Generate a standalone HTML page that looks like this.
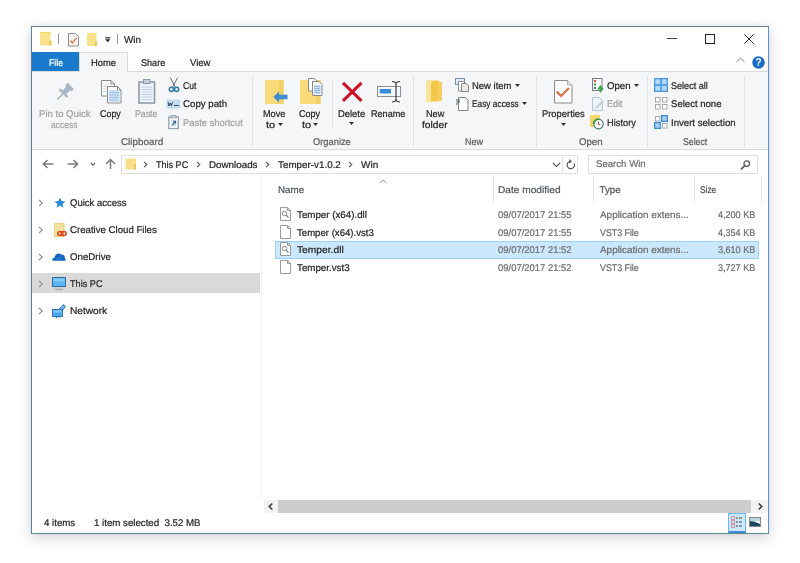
<!DOCTYPE html>
<html><head><meta charset="utf-8"><style>
html,body{margin:0;padding:0;width:800px;height:563px;overflow:hidden;background:#fff;}
body{position:relative;filter:blur(0.3px);font-family:"Liberation Sans",sans-serif;}
.t{position:absolute;white-space:nowrap;line-height:12px;font-size:9.75px;-webkit-text-stroke:0.22px currentColor;text-rendering:geometricPrecision;font-family:"Liberation Sans",sans-serif;}
svg{overflow:visible}
</style></head><body>
<div style="position:absolute;left:31px;top:26px;width:738px;height:508px;box-shadow:0 4px 14px rgba(0,0,0,0.16), 0 0 6px rgba(0,0,0,0.06);"></div>
<div style="position:absolute;left:31px;top:26px;width:738px;height:508px;background:#fff;box-sizing:border-box;border:1px solid #5b91c8;border-top-color:#6a7f93;border-left-color:#5580ab;border-bottom-color:#5a8797;"></div>
<svg style="position:absolute;left:40px;top:32px" width="12" height="14" viewBox="0 0 12 14"><rect x="0" y="0" width="10.5" height="13.5" fill="#f9e28a"/><rect x="9" y="8.5" width="2.5" height="5" fill="#ecc95a"/><rect x="0" y="0" width="10.5" height="1" fill="#f0d36a"/></svg>
<div style="position:absolute;left:58px;top:34px;width:1px;height:10px;background:#9a9a9a"></div>
<svg style="position:absolute;left:68px;top:33px" width="11" height="14" viewBox="0 0 11 14"><path d="M0.5 0.5h7l3 3v9.5h-10z" fill="#fbf4f0" stroke="#8f8f8f"/><path d="M2.5 7.5l2 2.5 4-5" fill="none" stroke="#d97a52" stroke-width="1.3"/></svg>
<svg style="position:absolute;left:87px;top:33px" width="11" height="14" viewBox="0 0 11 14"><rect x="0" y="0" width="9.5" height="13" fill="#f9e28a"/><rect x="8" y="8" width="2" height="5" fill="#ecc95a"/></svg>
<svg style="position:absolute;left:104px;top:36px" width="8" height="8" viewBox="0 0 8 8"><rect x="1.2" y="1.3" width="5.2" height="1.1" fill="#222"/><path d="M1.2 3.3h5.2l-2.6 3z" fill="#222"/></svg>
<div style="position:absolute;left:117px;top:34px;width:1px;height:10px;background:#9a9a9a"></div>
<div class="t" style="left:123.75px;top:35.00px;color:#262626;transform:scaleX(1.0147);transform-origin:0 0;">Win</div>
<div style="position:absolute;left:667px;top:38px;width:10px;height:1.3px;background:#3a3a3a"></div>
<svg style="position:absolute;left:705px;top:34px" width="10" height="10" viewBox="0 0 10 10"><rect x="0.5" y="0.5" width="9" height="9" fill="none" stroke="#2a2a2a" stroke-width="1.1"/></svg>
<svg style="position:absolute;left:744px;top:34px" width="10" height="10" viewBox="0 0 10 10"><path d="M0.3 0.3L9.7 9.7M9.7 0.3L0.3 9.7" stroke="#2a2a2a" stroke-width="1"/></svg>
<div style="position:absolute;left:32px;top:52px;width:47px;height:19px;background:#1979ca"></div>
<div class="t" style="left:48.75px;top:58.00px;color:#ffffff;transform:scaleX(0.8906);transform-origin:0 0;">File</div>
<div style="position:absolute;left:79px;top:52px;width:49px;height:20px;background:#f5f6f7;box-sizing:border-box;border:1px solid #dadbdc;border-bottom:none;"></div>
<div class="t" style="left:91.00px;top:58.00px;color:#262626;transform:scaleX(0.9615);transform-origin:0 0;">Home</div>
<div class="t" style="left:140.75px;top:58.00px;color:#262626;transform:scaleX(0.9327);transform-origin:0 0;">Share</div>
<div class="t" style="left:190.00px;top:58.00px;color:#262626;transform:scaleX(0.9762);transform-origin:0 0;">View</div>
<svg style="position:absolute;left:736px;top:57px" width="9" height="6" viewBox="0 0 9 6"><path d="M0.5 5L4.5 1L8.5 5" fill="none" stroke="#b4b4b4" stroke-width="1.1"/></svg>
<svg style="position:absolute;left:752px;top:56px" width="13" height="13" viewBox="0 0 13 13"><circle cx="6.5" cy="6.5" r="6.2" fill="#1b6ac9"/><text x="6.5" y="10.3" text-anchor="middle" font-family="Liberation Sans" font-weight="bold" font-size="10" fill="#fff">?</text></svg>
<div style="position:absolute;left:32px;top:71px;width:736px;height:79px;background:#f5f6f7;border-top:1px solid #dadbdc;border-bottom:1px solid #dadbdc;box-sizing:border-box;"></div>
<div style="position:absolute;left:80px;top:71px;width:47px;height:1px;background:#f5f6f7"></div>
<div style="position:absolute;left:252px;top:75px;width:1px;height:72px;background:#e2e3e4"></div>
<div style="position:absolute;left:413px;top:75px;width:1px;height:72px;background:#e2e3e4"></div>
<div style="position:absolute;left:536px;top:75px;width:1px;height:72px;background:#e2e3e4"></div>
<div style="position:absolute;left:647px;top:75px;width:1px;height:72px;background:#e2e3e4"></div>
<div style="position:absolute;left:744px;top:75px;width:1px;height:72px;background:#e2e3e4"></div>
<div style="position:absolute;left:332px;top:80px;width:1px;height:48px;background:#e2e3e4"></div>
<svg style="position:absolute;left:53.5px;top:82.8px" width="19.7" height="19.7" viewBox="0 0 24 24"><g transform="rotate(45 12 12)" fill="#a9b6c4"><rect x="6.5" y="0" width="11" height="4.5" rx="1"/><rect x="8.8" y="4" width="6.4" height="7.5"/><rect x="5" y="11" width="14" height="3" rx="0.8"/><rect x="11.2" y="13.5" width="1.8" height="10"/></g></svg>
<div class="t" style="left:38.75px;top:109.00px;color:#a2a2a2;transform:scaleX(0.9811);transform-origin:0 0;">Pin to Quick</div>
<div class="t" style="left:51.00px;top:119.50px;color:#a2a2a2;transform:scaleX(0.8710);transform-origin:0 0;">access</div>
<svg style="position:absolute;left:101px;top:80px" width="21" height="24" viewBox="0 0 21 24"><path d="M0.5 0.5h9.5l3.5 3.5v12h-13z" fill="#fff" stroke="#8a8a8a"/><path d="M10 0.5v3.5h3.5" fill="none" stroke="#8a8a8a"/><path d="M2 4h6M2 6.5h9M2 9h9M2 11.5h9" stroke="#c5d3e6" stroke-width="0.9"/><path d="M6.5 6.5h10l3.5 3.5v13h-13.5z" fill="#fff" stroke="#8a8a8a"/><path d="M16.5 6.5v3.5h3.5" fill="none" stroke="#8a8a8a"/><rect x="8" y="10" width="10.5" height="12" fill="#cfe3f6"/><path d="M8 12.5h10.5M8 15h10.5M8 17.5h10.5M8 20h10.5" stroke="#8fb6e0" stroke-width="0.8"/><path d="M11.5 10v12M15 10v12" stroke="#b5d0ec" stroke-width="0.6"/></svg>
<div class="t" style="left:100.00px;top:109.00px;color:#262626;transform:scaleX(0.9130);transform-origin:0 0;">Copy</div>
<svg style="position:absolute;left:138px;top:78px" width="18" height="26" viewBox="0 0 18 26"><rect x="1" y="4" width="15.5" height="21" fill="#edf3fa" stroke="#8e9aab" stroke-width="1.6"/><rect x="5.5" y="1.5" width="6.5" height="4" fill="#c5cfda" stroke="#8e9aab"/><path d="M3.5 9h10.5M3.5 11.5h10.5M3.5 14h10.5M3.5 16.5h10.5M3.5 19h10.5M3.5 21.5h10.5" stroke="#c0d0e2" stroke-width="1"/></svg>
<div class="t" style="left:135.00px;top:109.00px;color:#a2a2a2;transform:scaleX(0.9000);transform-origin:0 0;">Paste</div>
<svg style="position:absolute;left:168px;top:77px" width="12" height="16" viewBox="0 0 12 16"><path d="M2.3 0.5l5 9.5M9.7 0.5l-5 9.5" stroke="#56626a" stroke-width="0.9"/><circle cx="3.4" cy="12.3" r="2.1" fill="none" stroke="#2a7aa0" stroke-width="1.5"/><circle cx="8.6" cy="12.3" r="2.1" fill="none" stroke="#2a7aa0" stroke-width="1.5"/></svg>
<div class="t" style="left:183.00px;top:80.75px;color:#262626;transform:scaleX(0.8750);transform-origin:0 0;">Cut</div>
<svg style="position:absolute;left:167px;top:100px" width="13" height="8" viewBox="0 0 13 8"><rect x="0" y="0" width="13" height="8" fill="#c7def3" stroke="#b5cfe8" stroke-width="0.6"/><path d="M1 2l1 4 1.2-3 1.2 3 1-4" fill="none" stroke="#2b3a4a" stroke-width="0.9"/><path d="M7 5.5h5" stroke="#2b3a4a" stroke-width="0.9"/></svg>
<div class="t" style="left:183.25px;top:99.00px;color:#262626;transform:scaleX(0.9943);transform-origin:0 0;">Copy path</div>
<svg style="position:absolute;left:168px;top:115px" width="11" height="14" viewBox="0 0 11 14"><rect x="0.8" y="2" width="9.5" height="11.5" fill="#fff" stroke="#939fad" stroke-width="1.3"/><rect x="3" y="0.5" width="5" height="2.5" fill="#c9d3de" stroke="#939fad" stroke-width="0.8"/><rect x="3" y="5" width="5.5" height="6.5" fill="#d3e2f2"/><path d="M4.3 10.3L7.3 6.5M5 6.3h2.5v2.5" fill="none" stroke="#3a5f8a" stroke-width="1.1"/></svg>
<div class="t" style="left:183.25px;top:117.50px;color:#a2a2a2;transform:scaleX(0.9603);transform-origin:0 0;">Paste shortcut</div>
<div class="t" style="left:120.50px;top:136.50px;color:#5c5c5c;transform:scaleX(1.0119);transform-origin:0 0;">Clipboard</div>
<svg style="position:absolute;left:265px;top:80px" width="23" height="24" viewBox="0 0 23 24"><rect x="0" y="0" width="18.5" height="24" fill="#f8da78"/><rect x="14" y="0" width="4.5" height="24" fill="#f2cf62"/><path d="M22.5 14.8h-8.5v-3.5l-5.5 5.7 5.5 5.7v-3.5h8.5z" fill="#3c8dd8"/></svg>
<div class="t" style="left:262.50px;top:109.00px;color:#262626;transform:scaleX(0.9375);transform-origin:0 0;">Move</div>
<div class="t" style="left:266.00px;top:119.50px;color:#262626;transform:scaleX(1.1250);transform-origin:0 0;">to</div>
<svg style="position:absolute;left:278px;top:123px" width="5" height="3" viewBox="0 0 5 3"><path d="M0 0h5l-2.5 3z" fill="#333"/></svg>
<svg style="position:absolute;left:300px;top:78px" width="23" height="26" viewBox="0 0 23 26"><rect x="0" y="2" width="20.5" height="24" fill="#f8da78"/><rect x="16" y="2" width="4.5" height="24" fill="#f2cf62"/><path d="M8.5 0.5h6l2.5 2.5v10h-8.5z" fill="#fff" stroke="#8a8a8a"/><path d="M12.5 3.5h6.5l3 3v11h-9.5z" fill="#fff" stroke="#8a8a8a"/><rect x="14" y="7" width="6.5" height="9.5" fill="#cfe1f3"/><path d="M14 8.5h6.5M14 10.5h6.5M14 12.5h6.5M14 14.5h6.5" stroke="#8ab0da" stroke-width="0.9"/></svg>
<div class="t" style="left:298.75px;top:109.00px;color:#262626;transform:scaleX(0.9239);transform-origin:0 0;">Copy</div>
<div class="t" style="left:301.50px;top:119.50px;color:#262626;transform:scaleX(1.1250);transform-origin:0 0;">to</div>
<svg style="position:absolute;left:313px;top:123px" width="5" height="3" viewBox="0 0 5 3"><path d="M0 0h5l-2.5 3z" fill="#333"/></svg>
<svg style="position:absolute;left:341px;top:81px" width="22" height="21" viewBox="0 0 22 21"><path d="M2 1.8L20.5 19.8M20.5 1.8L2 19.8" stroke="#cf1128" stroke-width="3"/></svg>
<div class="t" style="left:338.00px;top:109.00px;color:#262626;transform:scaleX(0.9643);transform-origin:0 0;">Delete</div>
<svg style="position:absolute;left:349px;top:122px" width="5" height="3" viewBox="0 0 5 3"><path d="M0 0h5l-2.5 3z" fill="#333"/></svg>
<svg style="position:absolute;left:377px;top:80px" width="25" height="23" viewBox="0 0 25 23"><rect x="0.5" y="6.5" width="23" height="10" fill="#f4f9fd" stroke="#8f8f8f"/><rect x="2.7" y="9" width="11.3" height="4.5" fill="#3c8dd8"/><path d="M15 1.5c2 0 3.8 0.5 4 2.5 0.2-2 2-2.5 4-2.5M19 4v16M15 22c2 0 3.8-0.5 4-2.5 0.2 2 2 2.5 4 2.5" stroke="#3a3a3a" stroke-width="1.2" fill="none"/></svg>
<div class="t" style="left:371.00px;top:109.00px;color:#262626;transform:scaleX(0.9324);transform-origin:0 0;">Rename</div>
<div class="t" style="left:313.00px;top:136.50px;color:#5c5c5c;transform:scaleX(0.9550);transform-origin:0 0;">Organize</div>
<svg style="position:absolute;left:425px;top:80px" width="18" height="22" viewBox="0 0 18 22"><path d="M1 0.5h12l4 2v18l-4 1H1z" fill="#f4cf5e"/><path d="M1 0.5h5l1 2v19H1z" fill="#f9e49c"/><path d="M6 2.5l7-2v20l-7 1z" fill="#f3c84a"/></svg>
<div class="t" style="left:425.75px;top:109.00px;color:#262626;transform:scaleX(0.9375);transform-origin:0 0;">New</div>
<div class="t" style="left:421.75px;top:119.50px;color:#262626;transform:scaleX(1.0500);transform-origin:0 0;">folder</div>
<svg style="position:absolute;left:455px;top:78px" width="14" height="14" viewBox="0 0 14 14"><rect x="0.5" y="0.5" width="9" height="6" fill="#e3ecf5" stroke="#6f8fae"/><path d="M3.5 3.5h5l1.5 1.5v8h-6.5z" fill="#fff" stroke="#888"/><path d="M6.5 5.5h5l2 2v6h-7z" fill="#e8e8e8" stroke="#888"/></svg>
<div class="t" style="left:472.00px;top:80.75px;color:#262626;transform:scaleX(0.9695);transform-origin:0 0;">New item</div>
<svg style="position:absolute;left:515px;top:84px" width="5" height="3" viewBox="0 0 5 3"><path d="M0 0h5l-2.5 3z" fill="#333"/></svg>
<svg style="position:absolute;left:455px;top:96px" width="14" height="15" viewBox="0 0 14 15"><path d="M3.5 1.5h7l2.5 2.5v10.5h-9.5z" fill="#fff" stroke="#888"/><path d="M1 4h4M1.5 6h3.5M1 8h2" stroke="#3d5266" stroke-width="1"/></svg>
<div class="t" style="left:472.00px;top:99.00px;color:#262626;transform:scaleX(0.8545);transform-origin:0 0;">Easy access</div>
<svg style="position:absolute;left:522px;top:102px" width="5" height="3" viewBox="0 0 5 3"><path d="M0 0h5l-2.5 3z" fill="#333"/></svg>
<div class="t" style="left:464.50px;top:136.50px;color:#5c5c5c;transform:scaleX(0.9250);transform-origin:0 0;">New</div>
<svg style="position:absolute;left:554px;top:80px" width="19" height="24" viewBox="0 0 19 24"><path d="M0.5 0.5h13l4.5 4.5v18h-17.5z" fill="#fff" stroke="#8a8a8a"/><path d="M13.5 0.5v4.5h4.5" fill="#e9e4f0" stroke="#b0a8c0"/><path d="M2.8 11.5l4.2 4.5 8-8" fill="none" stroke="#dc7140" stroke-width="2.2"/></svg>
<div class="t" style="left:541.75px;top:109.00px;color:#262626;transform:scaleX(0.9611);transform-origin:0 0;">Properties</div>
<svg style="position:absolute;left:561px;top:123px" width="5" height="3" viewBox="0 0 5 3"><path d="M0 0h5l-2.5 3z" fill="#333"/></svg>
<svg style="position:absolute;left:592px;top:78px" width="12" height="15" viewBox="0 0 12 15"><rect x="0.5" y="0.5" width="9.5" height="12" fill="#fff" stroke="#7a7a8a"/><rect x="2" y="2" width="2" height="2" fill="#c9563a"/><rect x="2" y="5.5" width="2" height="2" fill="#3d9a4a"/><rect x="2" y="9" width="2" height="2" fill="#2a7f8a"/><path d="M8.5 14.5V9M6 11.5l2.5-3 2.5 3" stroke="#3aa24a" stroke-width="1.8" fill="none"/></svg>
<div class="t" style="left:606.75px;top:80.75px;color:#262626;transform:scaleX(0.9896);transform-origin:0 0;">Open</div>
<svg style="position:absolute;left:634px;top:84px" width="5" height="3" viewBox="0 0 5 3"><path d="M0 0h5l-2.5 3z" fill="#333"/></svg>
<svg style="position:absolute;left:592px;top:97px" width="12" height="14" viewBox="0 0 12 14"><path d="M0.5 0.5h7l3 3v10h-10z" fill="#eef3f9" stroke="#b4c2d2"/><path d="M4 11l7-7" stroke="#c0cddb" stroke-width="2"/></svg>
<div class="t" style="left:606.75px;top:99.00px;color:#a2a2a2;transform:scaleX(0.9265);transform-origin:0 0;">Edit</div>
<svg style="position:absolute;left:590px;top:115px" width="14" height="15" viewBox="0 0 14 15"><rect x="0" y="0" width="10" height="12" fill="#f3d66e"/><circle cx="8.5" cy="9" r="4.8" fill="#fff" stroke="#4a7f7a" stroke-width="1.2"/><path d="M3.7 9a4.8 4.8 0 0 1 4.8-4.8" fill="none" stroke="#2f9a3a" stroke-width="1.8"/><path d="M8.5 6.5v3h2" stroke="#b05050" stroke-width="0.9" fill="none"/></svg>
<div class="t" style="left:606.75px;top:117.50px;color:#262626;transform:scaleX(0.9516);transform-origin:0 0;">History</div>
<div class="t" style="left:578.75px;top:136.50px;color:#5c5c5c;transform:scaleX(0.9896);transform-origin:0 0;">Open</div>
<svg style="position:absolute;left:654px;top:78px" width="14" height="14" viewBox="0 0 14 14"><rect x="0" y="0" width="14" height="14" fill="#4b9ade"/><rect x="1.3" y="1.3" width="4.9" height="4.9" fill="#b0d9f8"/><rect x="7.8" y="1.3" width="4.9" height="4.9" fill="#b0d9f8"/><rect x="1.3" y="7.8" width="4.9" height="4.9" fill="#b0d9f8"/><rect x="7.8" y="7.8" width="4.9" height="4.9" fill="#b0d9f8"/></svg>
<div class="t" style="left:670.75px;top:80.75px;color:#262626;transform:scaleX(0.9313);transform-origin:0 0;">Select all</div>
<svg style="position:absolute;left:655px;top:97px" width="14" height="14" viewBox="0 0 14 14"><rect x="0.5" y="0.5" width="4.5" height="4.5" fill="#fff" stroke="#a8a8a8"/><rect x="7.5" y="0.5" width="4.5" height="4.5" fill="#fff" stroke="#a8a8a8"/><rect x="0.5" y="7.5" width="4.5" height="4.5" fill="#fff" stroke="#a8a8a8"/><rect x="7.5" y="7.5" width="4.5" height="4.5" fill="#fff" stroke="#a8a8a8"/></svg>
<div class="t" style="left:670.50px;top:99.00px;color:#262626;transform:scaleX(0.9804);transform-origin:0 0;">Select none</div>
<svg style="position:absolute;left:654px;top:115px" width="15" height="15" viewBox="0 0 15 15"><rect x="1.5" y="1.5" width="4.5" height="4.5" fill="#fff" stroke="#a8a8a8"/><rect x="7" y="0" width="7" height="7" fill="#3d8ed6"/><rect x="8.3" y="1.3" width="4.4" height="4.4" fill="#a5d2f5"/><rect x="0" y="7" width="7" height="7" fill="#3d8ed6"/><rect x="1.3" y="8.3" width="4.4" height="4.4" fill="#a5d2f5"/><rect x="8.5" y="8.5" width="4.5" height="4.5" fill="#fff" stroke="#a8a8a8"/></svg>
<div class="t" style="left:670.50px;top:117.50px;color:#262626;transform:scaleX(0.9848);transform-origin:0 0;">Invert selection</div>
<div class="t" style="left:683.00px;top:136.50px;color:#5c5c5c;transform:scaleX(0.8929);transform-origin:0 0;">Select</div>
<svg style="position:absolute;left:42px;top:159px" width="12" height="10" viewBox="0 0 12 10"><path d="M11.5 5H1.5M5.5 1L1.3 5l4.2 4" fill="none" stroke="#7c7c7c" stroke-width="1.5"/></svg>
<svg style="position:absolute;left:67px;top:159px" width="12" height="10" viewBox="0 0 12 10"><path d="M0.5 5h10M6.5 1l4.2 4-4.2 4" fill="none" stroke="#7c7c7c" stroke-width="1.5"/></svg>
<svg style="position:absolute;left:90px;top:162px" width="6" height="5" viewBox="0 0 6 5"><path d="M1 1L3 3.3 5 1" fill="none" stroke="#6a6a6a" stroke-width="1.2"/></svg>
<svg style="position:absolute;left:105px;top:158px" width="11" height="11" viewBox="0 0 11 11"><path d="M5.5 11V1.5M1 6l4.5-4.5L10 6" fill="none" stroke="#7c7c7c" stroke-width="1.5"/></svg>
<div style="position:absolute;left:121px;top:155px;width:457px;height:19px;box-sizing:border-box;border:1px solid #e0e0e0;background:#fff"></div>
<div style="position:absolute;left:562px;top:156px;width:1px;height:17px;background:#e3e3e3"></div>
<svg style="position:absolute;left:125px;top:158px" width="12" height="12" viewBox="0 0 12 12"><rect x="0.5" y="0.5" width="10.5" height="11" fill="#f9e088"/><rect x="9" y="6" width="2" height="5.5" fill="#eccb5c"/></svg>
<svg style="position:absolute;left:143px;top:161px" width="5" height="7" viewBox="0 0 5 7"><path d="M1 0.8L3.8 3.5 1 6.2" fill="none" stroke="#555" stroke-width="1.1"/></svg>
<div class="t" style="left:155.50px;top:159.50px;color:#262626;transform:scaleX(0.9286);transform-origin:0 0;">This PC</div>
<svg style="position:absolute;left:196px;top:161px" width="5" height="7" viewBox="0 0 5 7"><path d="M1 0.8L3.8 3.5 1 6.2" fill="none" stroke="#555" stroke-width="1.1"/></svg>
<div class="t" style="left:208.75px;top:159.50px;color:#262626;transform:scaleX(1.0052);transform-origin:0 0;">Downloads</div>
<svg style="position:absolute;left:265px;top:161px" width="5" height="7" viewBox="0 0 5 7"><path d="M1 0.8L3.8 3.5 1 6.2" fill="none" stroke="#555" stroke-width="1.1"/></svg>
<div class="t" style="left:278.00px;top:159.50px;color:#262626;transform:scaleX(1.0081);transform-origin:0 0;">Temper-v1.0.2</div>
<svg style="position:absolute;left:348px;top:161px" width="5" height="7" viewBox="0 0 5 7"><path d="M1 0.8L3.8 3.5 1 6.2" fill="none" stroke="#555" stroke-width="1.1"/></svg>
<div class="t" style="left:360.50px;top:159.50px;color:#262626;transform:scaleX(1.0294);transform-origin:0 0;">Win</div>
<svg style="position:absolute;left:552px;top:162px" width="9" height="6" viewBox="0 0 9 6"><path d="M0.8 0.8L4.5 4.5 8.2 0.8" fill="none" stroke="#555" stroke-width="1.2"/></svg>
<svg style="position:absolute;left:566px;top:160px" width="10" height="10" viewBox="0 0 10 10"><path d="M4.6 1.3A3.7 3.7 0 1 0 8 3.2" fill="none" stroke="#5a5a5a" stroke-width="1.2"/><path d="M3.2 -0.4L5.2 1.3 3.2 3" fill="none" stroke="#5a5a5a" stroke-width="1.1"/></svg>
<div style="position:absolute;left:588px;top:155px;width:170px;height:19px;box-sizing:border-box;border:1px solid #e0e0e0;background:#fff"></div>
<div class="t" style="left:595.50px;top:159.20px;color:#6d6d6d;transform:scaleX(0.9860);transform-origin:0 0;">Search Win</div>
<svg style="position:absolute;left:740px;top:160px" width="11" height="10" viewBox="0 0 11 10"><circle cx="6.8" cy="3.6" r="2.8" fill="none" stroke="#555" stroke-width="1.3"/><path d="M4.8 5.6L1 9.4" stroke="#555" stroke-width="1.5"/></svg>
<div style="position:absolute;left:261px;top:176px;width:1px;height:324px;background:#f3f3f3"></div>
<div style="position:absolute;left:32px;top:273px;width:228px;height:20px;background:#d9d9d9"></div>
<svg style="position:absolute;left:38px;top:199px" width="6" height="8" viewBox="0 0 6 8"><path d="M1 0.8L4.3 4 1 7.2" fill="none" stroke="#8c8c8c" stroke-width="1.1"/></svg>
<svg style="position:absolute;left:38px;top:226px" width="6" height="8" viewBox="0 0 6 8"><path d="M1 0.8L4.3 4 1 7.2" fill="none" stroke="#8c8c8c" stroke-width="1.1"/></svg>
<svg style="position:absolute;left:38px;top:253px" width="6" height="8" viewBox="0 0 6 8"><path d="M1 0.8L4.3 4 1 7.2" fill="none" stroke="#8c8c8c" stroke-width="1.1"/></svg>
<svg style="position:absolute;left:38px;top:280px" width="6" height="8" viewBox="0 0 6 8"><path d="M1 0.8L4.3 4 1 7.2" fill="none" stroke="#8c8c8c" stroke-width="1.1"/></svg>
<svg style="position:absolute;left:38px;top:307px" width="6" height="8" viewBox="0 0 6 8"><path d="M1 0.8L4.3 4 1 7.2" fill="none" stroke="#8c8c8c" stroke-width="1.1"/></svg>
<svg style="position:absolute;left:54px;top:197px" width="12" height="11" viewBox="0 0 12 11"><path d="M6 0.5l1.6 3.6 3.9.3-3 2.5 1 3.8L6 8.6 2.5 10.7l1-3.8-3-2.5 3.9-.3z" fill="#2b8ad6"/></svg>
<div class="t" style="left:70.20px;top:198.10px;color:#262626;transform:scaleX(0.9759);transform-origin:0 0;">Quick access</div>
<svg style="position:absolute;left:54px;top:223px" width="13" height="14" viewBox="0 0 13 14"><rect x="0.5" y="0.5" width="9.5" height="13" fill="#f7e1a0" stroke="#ecd084"/><ellipse cx="6.3" cy="10.5" rx="2.6" ry="2" fill="none" stroke="#de4a22" stroke-width="1.5"/><ellipse cx="9.7" cy="10.5" rx="2.6" ry="2" fill="none" stroke="#de4a22" stroke-width="1.5"/></svg>
<div class="t" style="left:70.20px;top:225.00px;color:#262626;transform:scaleX(0.9886);transform-origin:0 0;">Creative Cloud Files</div>
<svg style="position:absolute;left:52px;top:252px" width="14" height="9" viewBox="0 0 14 9"><path d="M1.2 8.8C-0.3 8.5 0 5.6 2.6 5.4 3.2 1.8 6.8 0.4 9 2.6 11.6 2.2 13.4 4.4 12.6 6.2 14.3 6.6 14.2 8.8 12.6 8.8z" fill="#1565c0"/><path d="M4.5 8.8C4.8 6.3 7.5 5.2 9.5 6.3" fill="none" stroke="#3f8ee0" stroke-width="0.9"/></svg>
<div class="t" style="left:70.20px;top:252.00px;color:#262626;transform:scaleX(0.9927);transform-origin:0 0;">OneDrive</div>
<svg style="position:absolute;left:52px;top:277px" width="14" height="14" viewBox="0 0 14 14"><rect x="0.5" y="0.5" width="13" height="9" fill="#5bb6f0" stroke="#2f6ea8"/><rect x="1.5" y="1.5" width="11" height="3" fill="#7fcaf6"/><rect x="1" y="10.5" width="12" height="1.5" fill="#c8ccd0"/><rect x="3" y="12.2" width="8" height="1" fill="#a0a6ac"/></svg>
<div class="t" style="left:70.20px;top:279.00px;color:#262626;transform:scaleX(0.9371);transform-origin:0 0;">This PC</div>
<svg style="position:absolute;left:52px;top:303px" width="14" height="15" viewBox="0 0 14 15"><path d="M6 7.5L11.5 1.5 13.5 3.5 9 9" fill="#6fb8ee" stroke="#2f78c0"/><rect x="0.5" y="6.5" width="10" height="7" fill="#4ea6ec" stroke="#2f78c0"/><rect x="1.5" y="7.5" width="8" height="2" fill="#86c8f5"/><path d="M4.5 13.5v1.5M7 13.5v1.5" stroke="#2f78c0"/></svg>
<div class="t" style="left:70.20px;top:306.00px;color:#262626;transform:scaleX(1.0389);transform-origin:0 0;">Network</div>
<div style="position:absolute;left:493px;top:176px;width:1px;height:26px;background:#e5e5e5"></div>
<div style="position:absolute;left:593px;top:176px;width:1px;height:26px;background:#e5e5e5"></div>
<div style="position:absolute;left:694px;top:176px;width:1px;height:26px;background:#e5e5e5"></div>
<div style="position:absolute;left:761px;top:176px;width:1px;height:26px;background:#e5e5e5"></div>
<svg style="position:absolute;left:379px;top:179px" width="8" height="5" viewBox="0 0 8 5"><path d="M0.5 4.3L4 0.8 7.5 4.3" fill="none" stroke="#9a9a9a" stroke-width="1"/></svg>
<div class="t" style="left:278.40px;top:185.30px;color:#50565e;transform:scaleX(1.0038);transform-origin:0 0;">Name</div>
<div class="t" style="left:498.00px;top:185.30px;color:#50565e;transform:scaleX(1.0400);transform-origin:0 0;">Date modified</div>
<div class="t" style="left:599.50px;top:185.30px;color:#50565e;">Type</div>
<div class="t" style="left:700.30px;top:185.30px;color:#50565e;transform:scaleX(0.8579);transform-origin:0 0;">Size</div>
<div style="position:absolute;left:275px;top:241px;width:484px;height:18px;background:#cce8ff;box-sizing:border-box;border:1px solid #99d1ff"></div>
<svg style="position:absolute;left:280px;top:207px" width="11" height="14" viewBox="0 0 11 14"><path d="M0.5 0.5h7l3 3v10h-10z" fill="#fff" stroke="#9a9a9a"/><path d="M7.5 0.5v3h3" fill="none" stroke="#9a9a9a"/><circle cx="4.5" cy="6.5" r="2.2" fill="none" stroke="#888" stroke-width="1"/><path d="M6 8l2.5 2.5" stroke="#888" stroke-width="1.3"/></svg>
<div class="t" style="left:297.00px;top:210.00px;color:#262626;">Temper (x64).dll</div>
<div class="t" style="left:498.00px;top:210.00px;color:#6d6d6d;transform:scaleX(0.9684);transform-origin:0 0;">09/07/2017 21:55</div>
<div class="t" style="left:599.50px;top:210.00px;color:#6d6d6d;transform:scaleX(1.0172);transform-origin:0 0;">Application extens...</div>
<div class="t" style="left:718.40px;top:210.00px;color:#6d6d6d;transform:scaleX(0.9275);transform-origin:0 0;">4,200 KB</div>
<svg style="position:absolute;left:280px;top:225px" width="11" height="14" viewBox="0 0 11 14"><path d="M0.5 0.5h7l3 3v10h-10z" fill="#fff" stroke="#9a9a9a"/><path d="M7.5 0.5v3h3" fill="none" stroke="#9a9a9a"/></svg>
<div class="t" style="left:297.00px;top:227.50px;color:#262626;transform:scaleX(0.9840);transform-origin:0 0;">Temper (x64).vst3</div>
<div class="t" style="left:498.00px;top:227.50px;color:#6d6d6d;transform:scaleX(0.9684);transform-origin:0 0;">09/07/2017 21:55</div>
<div class="t" style="left:599.50px;top:227.50px;color:#6d6d6d;transform:scaleX(0.9047);transform-origin:0 0;">VST3 File</div>
<div class="t" style="left:718.40px;top:227.50px;color:#6d6d6d;transform:scaleX(0.9275);transform-origin:0 0;">4,354 KB</div>
<svg style="position:absolute;left:280px;top:242px" width="11" height="14" viewBox="0 0 11 14"><path d="M0.5 0.5h7l3 3v10h-10z" fill="#fff" stroke="#9a9a9a"/><path d="M7.5 0.5v3h3" fill="none" stroke="#9a9a9a"/><circle cx="4.5" cy="6.5" r="2.2" fill="none" stroke="#888" stroke-width="1"/><path d="M6 8l2.5 2.5" stroke="#888" stroke-width="1.3"/></svg>
<div class="t" style="left:297.00px;top:245.00px;color:#262626;transform:scaleX(1.0511);transform-origin:0 0;">Temper.dll</div>
<div class="t" style="left:498.00px;top:245.00px;color:#6d6d6d;transform:scaleX(0.9684);transform-origin:0 0;">09/07/2017 21:52</div>
<div class="t" style="left:599.50px;top:245.00px;color:#6d6d6d;transform:scaleX(1.0172);transform-origin:0 0;">Application extens...</div>
<div class="t" style="left:718.40px;top:245.00px;color:#6d6d6d;transform:scaleX(0.9275);transform-origin:0 0;">3,610 KB</div>
<svg style="position:absolute;left:280px;top:260px" width="11" height="14" viewBox="0 0 11 14"><path d="M0.5 0.5h7l3 3v10h-10z" fill="#fff" stroke="#9a9a9a"/><path d="M7.5 0.5v3h3" fill="none" stroke="#9a9a9a"/></svg>
<div class="t" style="left:297.00px;top:262.50px;color:#262626;">Temper.vst3</div>
<div class="t" style="left:498.00px;top:262.50px;color:#6d6d6d;transform:scaleX(0.9684);transform-origin:0 0;">09/07/2017 21:52</div>
<div class="t" style="left:599.50px;top:262.50px;color:#6d6d6d;transform:scaleX(0.9047);transform-origin:0 0;">VST3 File</div>
<div class="t" style="left:718.40px;top:262.50px;color:#6d6d6d;transform:scaleX(0.9275);transform-origin:0 0;">3,727 KB</div>
<div style="position:absolute;left:264px;top:500px;width:504px;height:12.5px;background:#f3f3f3"></div>
<div style="position:absolute;left:278px;top:500px;width:473px;height:12.5px;background:#cdcdcd"></div>
<svg style="position:absolute;left:267px;top:502px" width="7" height="9" viewBox="0 0 7 9"><path d="M5.3 1.5L2.3 4.5 5.3 7.5" fill="none" stroke="#404040" stroke-width="1.7"/></svg>
<svg style="position:absolute;left:757px;top:502px" width="7" height="9" viewBox="0 0 7 9"><path d="M1.7 1.5l3 3-3 3" fill="none" stroke="#404040" stroke-width="1.7"/></svg>
<div class="t" style="left:43.75px;top:518.25px;color:#262626;transform:scaleX(0.9922);transform-origin:0 0;">4 items</div>
<div class="t" style="left:93.75px;top:518.25px;color:#262626;transform:scaleX(0.9930);transform-origin:0 0;">1 item selected&nbsp; 3.52 MB</div>
<div style="position:absolute;left:728px;top:513px;width:18px;height:20px;background:#cce8ff;box-sizing:border-box;border:1px solid #6fb8ea;border-bottom:2px solid #3f8fd0"></div>
<svg style="position:absolute;left:731px;top:516px" width="12" height="12" viewBox="0 0 12 12"><rect x="0.5" y="0.5" width="3" height="3" fill="none" stroke="#d09aa0"/><rect x="0.5" y="4.5" width="3" height="3" fill="none" stroke="#d09aa0"/><rect x="0.5" y="8.5" width="3" height="3" fill="none" stroke="#d09aa0"/><path d="M5 2h2M8 2h3M5 6h2M8 6h3M5 10h2M8 10h3" stroke="#444" stroke-width="1"/></svg>
<svg style="position:absolute;left:749px;top:517px" width="12" height="10" viewBox="0 0 12 10"><rect x="0.5" y="0.5" width="11" height="9" fill="#fff" stroke="#888"/><path d="M1 4c3 0 6 1 10 3v2H1z" fill="#1c4a60"/><path d="M1 1h10v3H1z" fill="#b8d8ea"/></svg>
</body></html>
